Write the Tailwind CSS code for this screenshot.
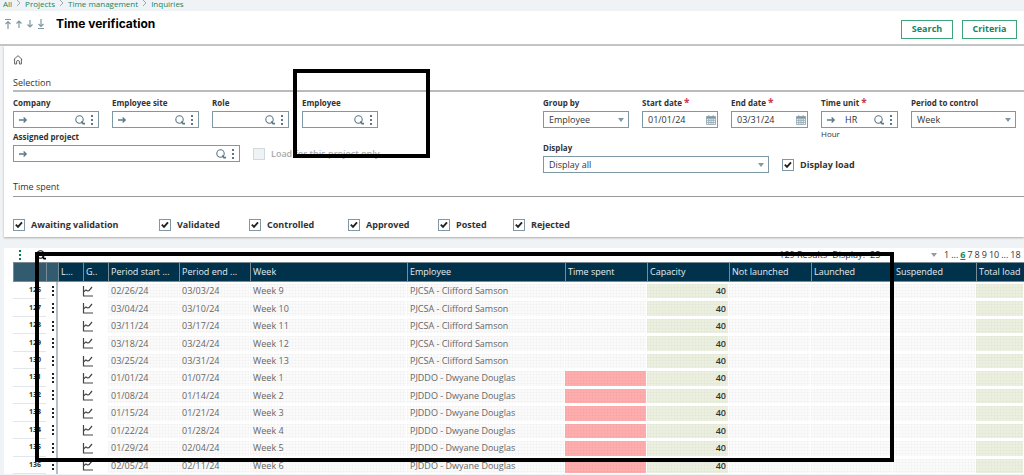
<!DOCTYPE html>
<html lang="en">
<head>
<meta charset="utf-8">
<title>Time verification</title>
<script src="https://cdn.jsdelivr.net/npm/@tailwindcss/browser@4"></script>
</head>
<body class="relative h-screen overflow-hidden bg-[#f0f3f5] font-['Open_Sans',sans-serif] text-[9px] leading-3 text-[#333]">
<svg class="hidden">
  <symbol id="lens" viewBox="0 0 12 12"><circle cx="5.5" cy="5.5" r="3.7" fill="none" stroke="currentColor" stroke-width="1.1"/><path d="M7.3 7.6 9 9.6H11" fill="none" stroke="currentColor" stroke-width="1.6"/></symbol>
  <symbol id="dots" viewBox="0 0 4 12"><path d="M1 1h2v2H1zM1 5h2v2H1zM1 9h2v2H1z" fill="currentColor"/></symbol>
  <symbol id="go" viewBox="0 0 10 8"><path d="M1 4h7M5.6 1.5 8.2 4 5.6 6.5" fill="none" stroke="currentColor" stroke-width="1.3"/></symbol>
  <symbol id="caret" viewBox="0 0 6 4"><path d="M0 0h6L3 4z" fill="currentColor"/></symbol>
  <symbol id="cal" viewBox="0 0 10 10"><path d="M.5 1.5h9v8h-9zM.5 3.8h9M.5 5.7h9M.5 7.6h9M2.8 3.8v5.7M5 3.8v5.7M7.2 3.8v5.7M2.8 0v2M7.2 0v2" fill="none" stroke="currentColor" stroke-width=".7"/><path d="M.5 1.5h9v2h-9z" fill="currentColor"/></symbol>
  <symbol id="tick" viewBox="0 0 12 12"><path d="M2.8 5.6 5 7.8 9 3.4" fill="none" stroke="#222" stroke-width="1.9"/></symbol>
  <symbol id="chev" viewBox="0 0 5 8"><path d="M1 1l3 3-3 3" fill="none" stroke="#9aa9b3" stroke-width="1"/></symbol>
  <symbol id="chart" viewBox="0 0 12 12"><path d="M1.5 1v10H11M2 6.5l2-1.6 1.3 1L7 5.6l3-3.6" fill="none" stroke="#444" stroke-width="1.2"/></symbol>
</svg>

<nav class="flex h-[11px] items-start gap-1 pl-[3px] text-[8px] leading-[8px] text-[#16855c]" aria-label="Breadcrumb">
  <a href="#">All</a><svg class="-mt-px h-2 w-[5px]"><use href="#chev"/></svg>
  <a href="#">Projects</a><svg class="-mt-px h-2 w-[5px]"><use href="#chev"/></svg>
  <a href="#">Time management</a><svg class="-mt-px h-2 w-[5px]"><use href="#chev"/></svg>
  <a href="#">Inquiries</a>
</nav>

<header class="flex h-[35px] items-start border-b-2 border-[#c3c5c6] bg-white pr-[7px] pl-1">
  <div class="mt-[7px] flex gap-[3px] text-[#7f98a5]">
    <button aria-label="First" class="block"><svg class="h-3 w-2" viewBox="0 0 8 12"><path d="M1 1.5h6M4 11V3.5M1.5 6 4 3.5 6.5 6" fill="none" stroke="currentColor" stroke-width="1.2"/></svg></button>
    <button aria-label="Previous" class="block"><svg class="h-3 w-2" viewBox="0 0 8 12"><path d="M4 10V3M1.5 5.5 4 3l2.5 2.5" fill="none" stroke="currentColor" stroke-width="1.2"/></svg></button>
    <button aria-label="Next" class="block"><svg class="h-3 w-2" viewBox="0 0 8 12"><path d="M4 2v7M1.5 6.5 4 9l2.5-2.5" fill="none" stroke="currentColor" stroke-width="1.2"/></svg></button>
    <button aria-label="Last" class="block"><svg class="h-3 w-2" viewBox="0 0 8 12"><path d="M1 10.5h6M4 1v7.5M1.5 6 4 8.5 6.5 6" fill="none" stroke="currentColor" stroke-width="1.2"/></svg></button>
  </div>
  <h1 class="mt-[5px] ml-[11px] font-['Inter',sans-serif] text-[12px] leading-4 font-bold text-black">Time verification</h1>
  <div class="mt-[9px] ml-auto flex gap-[9px] font-bold text-[#16855c]">
    <button class="h-[19px] w-[52px] border border-[#3fa37a] pb-[2px]">Search</button>
    <button class="h-[19px] w-[55px] border border-[#3fa37a] pb-[2px]">Criteria</button>
  </div>
</header>

<main class="pl-1">
<form class="bg-white pt-2 pr-2 pb-[6px] pl-[9px] shadow-[0_1px_2px_#aaa]">
  <svg class="h-[12px] w-[10px]" viewBox="0 0 10 12" fill="none" stroke="#555"><path d="M.8 5.5 5 1.7l4.2 3.8M1.6 5v5h2V7.200Q5 5.600 6.400 7.200V10h2V5" stroke-width=".9"/></svg>
  <h2 class="mt-[11px] -mr-2 border-b-2 border-[#b8babb] pb-px">Selection</h2>

  <div class="mt-[5px] grid grid-cols-[530fr_473fr]">
    <div>
      <div class="flex gap-[13px]">
        <div class="w-[86px]"><label for="company" class="block pb-[2px] text-[8px] font-bold">Company</label>
          <div class="flex h-[17px] items-center border border-[#7f98a5] px-1 text-[#5b7886]"><svg class="h-2 w-[10px]"><use href="#go"/></svg><input id="company" class="w-0 grow outline-none"><svg class="h-3 w-3"><use href="#lens"/></svg><svg class="ml-1 h-3 w-1"><use href="#dots"/></svg></div></div>
        <div class="w-[87px]"><label for="site" class="block pb-[2px] text-[8px] font-bold">Employee site</label>
          <div class="flex h-[17px] items-center border border-[#7f98a5] px-1 text-[#5b7886]"><svg class="h-2 w-[10px]"><use href="#go"/></svg><input id="site" class="w-0 grow outline-none"><svg class="h-3 w-3"><use href="#lens"/></svg><svg class="ml-1 h-3 w-1"><use href="#dots"/></svg></div></div>
        <div class="w-[77px]"><label for="role" class="block pb-[2px] text-[8px] font-bold">Role</label>
          <div class="flex h-[17px] items-center border border-[#7f98a5] px-1 text-[#5b7886]"><input id="role" class="w-0 grow outline-none"><svg class="h-3 w-3"><use href="#lens"/></svg><svg class="ml-1 h-3 w-1"><use href="#dots"/></svg></div></div>
        <div class="w-[76px]"><label for="employee" class="block pb-[2px] text-[8px] font-bold">Employee</label>
          <div class="flex h-[17px] items-center border border-[#7f98a5] px-1 text-[#5b7886]"><input id="employee" class="w-0 grow outline-none"><svg class="h-3 w-3"><use href="#lens"/></svg><svg class="ml-1 h-3 w-1"><use href="#dots"/></svg></div></div>
      </div>
      <div class="mt-[3px] flex items-end gap-[13px]">
        <div class="w-[227px]"><label for="project" class="block pb-[2px] text-[8px] font-bold">Assigned project</label>
          <div class="flex h-[17px] items-center border border-[#7f98a5] px-1 text-[#5b7886]"><svg class="h-2 w-[10px]"><use href="#go"/></svg><input id="project" class="w-0 grow outline-none"><svg class="h-3 w-3"><use href="#lens"/></svg><svg class="ml-1 h-3 w-1"><use href="#dots"/></svg></div></div>
        <label class="flex items-center gap-[6px] pb-[2px] font-semibold text-[#aaa]"><input type="checkbox" disabled class="size-3 appearance-none border border-[#d0d9dd] bg-[#f0f3f5]">Load for this project only</label>
      </div>
    </div>

    <div>
      <div class="flex gap-[13px]">
        <div class="w-[86px]"><label for="group" class="block pb-[2px] text-[8px] font-bold">Group by</label>
          <div class="flex h-[17px] items-center border border-[#7f98a5] pr-1 pl-[5px]"><select id="group" class="w-0 grow appearance-none"><option>Employee</option></select><svg class="h-1 w-[6px] text-[#7f98a5]"><use href="#caret"/></svg></div></div>
        <div class="w-[76px]"><label for="start" class="block pb-[2px] text-[8px] font-bold">Start date <span class="text-[10px] leading-none text-[#c7384f]">*</span></label>
          <div class="flex h-[17px] items-center border border-[#7f98a5] pr-px pl-[5px]"><input id="start" value="01/01/24" class="w-0 grow"><svg class="size-[10px] text-[#7f98a5]"><use href="#cal"/></svg></div></div>
        <div class="w-[77px]"><label for="end" class="block pb-[2px] text-[8px] font-bold">End date <span class="text-[10px] leading-none text-[#c7384f]">*</span></label>
          <div class="flex h-[17px] items-center border border-[#7f98a5] pr-px pl-[5px]"><input id="end" value="03/31/24" class="w-0 grow"><svg class="size-[10px] text-[#7f98a5]"><use href="#cal"/></svg></div></div>
        <div class="w-[77px]"><label for="unit" class="block pb-[2px] text-[8px] font-bold">Time unit <span class="text-[10px] leading-none text-[#c7384f]">*</span></label>
          <div class="flex h-[17px] items-center border border-[#7f98a5] px-1 text-[#5b7886]"><svg class="h-2 w-[10px]"><use href="#go"/></svg><input id="unit" value="HR" class="ml-[9px] w-0 grow text-[#333]"><svg class="h-3 w-3"><use href="#lens"/></svg><svg class="ml-1 h-3 w-1"><use href="#dots"/></svg></div>
          <p class="text-[8px]">Hour</p></div>
        <div class="grow"><label for="period" class="block pb-[2px] text-[8px] font-bold">Period to control</label>
          <div class="flex h-[17px] items-center border border-[#7f98a5] pr-1 pl-[5px]"><select id="period" class="w-0 grow appearance-none"><option>Week</option></select><svg class="h-1 w-[6px] text-[#7f98a5]"><use href="#caret"/></svg></div></div>
      </div>
      <div class="mt-[2px] flex items-end gap-[13px]">
        <div class="w-[226px]"><label for="display" class="block pb-[2px] text-[8px] font-bold">Display</label>
          <div class="flex h-[17px] items-center border border-[#7f98a5] pr-1 pl-[5px]"><select id="display" class="w-0 grow appearance-none"><option>Display all</option></select><svg class="h-1 w-[6px] text-[#7f98a5]"><use href="#caret"/></svg></div></div>
        <label class="flex items-center gap-[6px] pb-[2px] font-bold"><span class="grid size-3"><input type="checkbox" checked class="size-3 appearance-none border border-[#7f98a5] [grid-area:1/1]"><svg class="size-3 [grid-area:1/1]"><use href="#tick"/></svg></span>Display load</label>
      </div>
    </div>
  </div>

  <h2 class="mt-2 -mr-2 border-b border-[#999] pb-[3px]">Time spent</h2>

  <div class="mt-[22px] flex font-bold">
    <label class="flex w-[146px] items-center gap-[6px]"><span class="grid size-3"><input type="checkbox" checked class="size-3 appearance-none border border-[#7f98a5] [grid-area:1/1]"><svg class="size-3 [grid-area:1/1]"><use href="#tick"/></svg></span>Awaiting validation</label>
    <label class="flex w-[90px] items-center gap-[6px]"><span class="grid size-3"><input type="checkbox" checked class="size-3 appearance-none border border-[#7f98a5] [grid-area:1/1]"><svg class="size-3 [grid-area:1/1]"><use href="#tick"/></svg></span>Validated</label>
    <label class="flex w-[99px] items-center gap-[6px]"><span class="grid size-3"><input type="checkbox" checked class="size-3 appearance-none border border-[#7f98a5] [grid-area:1/1]"><svg class="size-3 [grid-area:1/1]"><use href="#tick"/></svg></span>Controlled</label>
    <label class="flex w-[90px] items-center gap-[6px]"><span class="grid size-3"><input type="checkbox" checked class="size-3 appearance-none border border-[#7f98a5] [grid-area:1/1]"><svg class="size-3 [grid-area:1/1]"><use href="#tick"/></svg></span>Approved</label>
    <label class="flex w-[75px] items-center gap-[6px]"><span class="grid size-3"><input type="checkbox" checked class="size-3 appearance-none border border-[#7f98a5] [grid-area:1/1]"><svg class="size-3 [grid-area:1/1]"><use href="#tick"/></svg></span>Posted</label>
    <label class="flex items-center gap-[6px]"><span class="grid size-3"><input type="checkbox" checked class="size-3 appearance-none border border-[#7f98a5] [grid-area:1/1]"><svg class="size-3 [grid-area:1/1]"><use href="#tick"/></svg></span>Rejected</label>
  </div>
</form>

<section class="mt-[11px] bg-white pl-[9px]">
  <div class="flex h-[14px] items-center pl-[5px]">
    <button aria-label="Grid actions" class="text-[#00804f]"><svg class="block h-3 w-1"><use href="#dots"/></svg></button>
    <button aria-label="Find" class="ml-[13px] text-black"><svg class="block h-3 w-3"><use href="#lens"/></svg></button>
    <span class="ml-auto">129 Results</span>
    <label for="size" class="ml-[5px]">Display:</label>
    <span class="ml-[5px] flex w-[67px] items-center"><select id="size" class="w-0 grow appearance-none"><option>25</option></select><svg class="h-1 w-[6px] text-[#999]"><use href="#caret"/></svg></span>
    <nav class="flex w-[87px] gap-[2px] pl-[7px]" aria-label="Pages"><a href="#">1</a><span>...</span><a href="#" class="font-bold text-[#16855c] underline">6</a><a href="#">7</a><a href="#">8</a><a href="#">9</a><a href="#">10</a><span>...</span><a href="#">18</a></nav>
  </div>
  <table class="h-[212px] w-full table-fixed border-separate border-spacing-0 whitespace-nowrap">
    <colgroup><col class="w-[33px]"><col class="w-3"><col class="w-[25px]"><col class="w-[25px]"><col class="w-[71px]"><col class="w-[71px]"><col class="w-[157px]"><col class="w-[158px]"><col class="w-[82px]"><col class="w-[82px]"><col class="w-[82px]"><col class="w-[82px]"><col class="w-[83px]"><col></colgroup>
    <thead>
      <tr class="h-[20px] bg-[#00324c] text-left text-[#e6ecef] *:border-y *:border-l *:border-[#7b8b93] *:p-0 *:pl-[2px] *:font-normal">
        <th class="bg-[#335b70]"></th><th class="bg-[#335b70]"></th><th>L...</th><th>G..</th><th>Period start ...</th><th>Period end ...</th><th>Week</th><th>Employee</th><th>Time spent</th><th>Capacity</th><th>Not launched</th><th>Launched</th><th>Suspended</th><th>Total load</th>
      </tr>
    </thead>
    <tbody id="rows"></tbody>
  </table>
</section>
</main>

<div class="pointer-events-none absolute top-[69px] left-[293px] h-[89px] w-[137px] border-4 border-black"></div>
<div class="pointer-events-none absolute top-[252px] left-[35px] h-[210px] w-[859px] border-4 border-black"></div>

<script>
const data = [
  ["02/26/24","03/03/24",9],["03/04/24","03/10/24",10],["03/11/24","03/17/24",11],["03/18/24","03/24/24",12],["03/25/24","03/31/24",13],
  ["01/01/24","01/07/24",1],["01/08/24","01/14/24",2],["01/15/24","01/21/24",3],["01/22/24","01/28/24",4],["01/29/24","02/04/24",5],["02/05/24","02/11/24",6]
];
const cell = "border-t-2 border-r border-b border-white p-0 pl-[3px] bg-[repeating-linear-gradient(90deg,#00000005_0_1px,transparent_1px_3px),repeating-linear-gradient(#00000005_0_1px,transparent_1px_3px)]";
document.getElementById("rows").innerHTML = data.map(([a, b, w], i) => {
  const late = i > 4;
  return `<tr class="text-[#666]">
  <td class="border-b border-[#e4e7e9] p-0 pr-[5px] text-right text-[7px] font-bold text-[#333]">${126 + i}</td>
  <td class="border-r-2 border-[#b5c0c6] p-0 text-[#222]"><svg class="ml-[5px] block h-3 w-1"><use href="#dots"/></svg></td>
  <td class="p-0"></td><td class="p-0"><svg class="-ml-px block h-3 w-3"><use href="#chart"/></svg></td>
  <td class="${cell} bg-[#fbfbfb]">${a}</td><td class="${cell} bg-[#fbfbfb]">${b}</td><td class="${cell} bg-[#fbfbfb]">Week ${w}</td>
  <td class="${cell} bg-[#fbfbfb]">${late ? "PJDDO - Dwyane Douglas" : "PJCSA - Clifford Samson"}</td>
  <td class="${cell} ${late ? "bg-[#ffadad]" : "bg-[#fbfbfb]"}"></td>
  <td class="${cell} bg-[#ecf0df] pr-[2px] text-right font-semibold text-[#333]">40</td>
  <td class="${cell} bg-[#fbfbfb]"></td><td class="${cell} bg-[#fbfbfb]"></td><td class="${cell} bg-[#fbfbfb]"></td><td class="${cell} bg-[#ecf0df]"></td></tr>`;
}).join("");
</script>
</body>
</html>
